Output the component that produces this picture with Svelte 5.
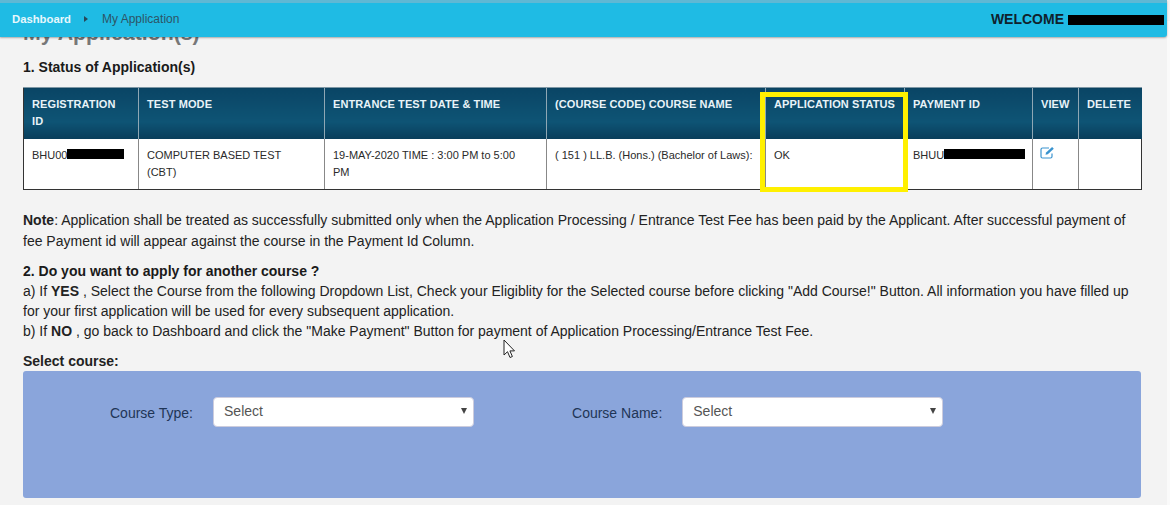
<script>
	const columns = [
		{ head: 'REGISTRATION ID', width: 115 },
		{ head: 'TEST MODE', width: 186 },
		{ head: 'ENTRANCE TEST DATE & TIME', width: 222 },
		{ head: '(COURSE CODE) COURSE NAME', width: 219 },
		{ head: 'APPLICATION STATUS', width: 139 },
		{ head: 'PAYMENT ID', width: 128 },
		{ head: 'VIEW', width: 46 },
		{ head: 'DELETE', width: 63 }
	];
</script>

<header class="topbar">
	<nav class="crumbs">
		<a href="#dashboard">Dashboard</a>
		<span class="caret"></span>
		<span class="current">My Application</span>
	</nav>
	<div class="welcome">WELCOME <span class="redact name"></span></div>
</header>

<main class="page">
	<h2 class="title">My Application(s)</h2>
	<h4 class="step">1. Status of Application(s)</h4>

	<div class="table-wrap">
		<table>
			<colgroup>
				{#each columns as col}
					<col style="width: {col.width}px" />
				{/each}
			</colgroup>
			<thead>
				<tr>
					{#each columns as col}
						<th>{col.head}</th>
					{/each}
				</tr>
			</thead>
			<tbody>
				<tr>
					<td class="nowrap">BHU00<span class="redact reg"></span></td>
					<td>COMPUTER BASED TEST<br />(CBT)</td>
					<td>19-MAY-2020 TIME : 3:00 PM to 5:00<br />PM</td>
					<td>( 151 ) LL.B. (Hons.) (Bachelor of Laws):</td>
					<td>OK</td>
					<td class="nowrap">BHUU<span class="redact pay"></span></td>
					<td>
						<svg class="edit" width="15" height="13" viewBox="0 0 15 13" fill="none" stroke="#3a93cf" stroke-width="1.2" aria-hidden="true">
							<path d="M12 7.5v3a1.5 1.5 0 0 1-1.5 1.5h-8A1.5 1.5 0 0 1 1 10.500v-7A1.500 1.500 0 0 1 2.500 2h6.500" />
							<path d="M5.500 8.800l.6-2.300 6-5.500 1.700 1.700-6 5.500z" fill="#3a93cf" stroke="none" />
						</svg>
					</td>
					<td></td>
				</tr>
			</tbody>
		</table>
		<div class="highlight"></div>
	</div>

	<p class="note">
		<b>Note</b>: Application shall be treated as successfully submitted only when the Application Processing / Entrance Test Fee has been paid by the Applicant. After successful payment of fee Payment id will appear against the course in the Payment Id Column.
	</p>

	<div class="another">
		<h4 class="step2">2. Do you want to apply for another course ?</h4>
		<p>a) If <b>YES</b> , Select the Course from the following Dropdown List, Check your Eligiblity for the Selected course before clicking "Add Course!" Button. All information you have filled up for your first application will be used for every subsequent application.</p>
		<p>b) If <b>NO</b> , go back to Dashboard and click the "Make Payment" Button for payment of Application Processing/Entrance Test Fee.</p>
	</div>

	<div class="select-label">Select course:</div>
	<section class="panel">
		<div class="field type">
			<span class="label">Course Type:</span>
			<div class="select">Select<span class="arrow"></span></div>
		</div>
		<div class="field">
			<span class="label">Course Name:</span>
			<div class="select">Select<span class="arrow"></span></div>
		</div>
	</section>

	<svg class="cursor" width="14" height="20" viewBox="0 0 14 20" aria-hidden="true">
		<path d="M1 1v15l3.500-3.300 2.500 5.800 2.400-1-2.500-5.600h4.600z" fill="#fff" stroke="#222" stroke-width="1" />
	</svg>
</main>

<style>
	:global(body) {
		background: #f3f3f3;
		font-family: 'Liberation Sans', Arial, sans-serif;
		color: #222;
		overflow: hidden;
	}

	.topbar {
		position: relative;
		z-index: 2;
		box-sizing: border-box;
		width: 1167px;
		height: 37px;
		border-top: 3px solid #5fb8d4;
		border-bottom-right-radius: 3px;
		background: #1fbbe4;
		box-shadow: 0 1px 2px rgba(0, 0, 0, 0.3);
		display: flex;
		align-items: center;
		justify-content: space-between;
		padding: 0 3px 2px 12px;
	}

	.crumbs {
		display: flex;
		align-items: center;
		font-size: 12px;
	}

	.crumbs a {
		color: #e6f7fc;
		font-size: 11.300px;
		font-weight: bold;
		text-decoration: none;
	}

	.caret {
		width: 0;
		height: 0;
		margin: 0 14px 0 13px;
		border-left: 4px solid #27485a;
		border-top: 3.500px solid transparent;
		border-bottom: 3.500px solid transparent;
	}

	.current {
		color: #2d5566;
	}

	.welcome {
		display: flex;
		align-items: center;
		gap: 4px;
		font-size: 14px;
		font-weight: bold;
		color: #10222c;
	}

	.redact {
		display: inline-block;
		background: #000;
	}

	.name {
		width: 96px;
		height: 10px;
		margin-top: 2px;
	}

	.page {
		position: relative;
		box-sizing: border-box;
		width: 1170px;
		height: 494px;
		margin-top: -16px;
		padding: 0 29px 0 23px;
		overflow: hidden;
		border-right: 3px solid #fafafa;
	}

	.title {
		margin: 0;
		font-size: 21.300px;
		line-height: 24px;
		color: #777;
	}

	.step {
		margin: 14px 0 0;
		font-size: 14px;
		line-height: 16px;
		color: #1a1a1a;
	}

	.table-wrap {
		position: relative;
		margin-top: 12px;
		width: 1118px;
	}

	table {
		width: 1118px;
		table-layout: fixed;
		border-collapse: collapse;
		font-size: 11px;
	}

	th {
		height: 51px;
		box-sizing: border-box;
		padding: 8px 4px 0 8px;
		vertical-align: top;
		text-align: left;
		font-size: 11px;
		line-height: 17px;
		letter-spacing: 0.1px;
		color: #e8f3f8;
		background: linear-gradient(#0a4565, #0e5475 65%, #093d5a);
		border-left: 1px solid #8fa7b4;
		border-top: 1px solid #7d97a5;
	}

	th:first-child {
		padding-right: 14px;
	}

	td {
		height: 51px;
		box-sizing: border-box;
		padding: 8px 8px 0;
		vertical-align: top;
		line-height: 17px;
		background: #fff;
		color: #2a2a2a;
		border-left: 1px solid #888;
		border-bottom: 1px solid #333;
	}

	th:first-child,
	td:first-child {
		border-left: 1px solid #333;
	}

	td:last-child {
		border-right: 1px solid #333;
	}

	.nowrap {
		white-space: nowrap;
	}

	.reg {
		width: 57px;
		height: 10px;
	}

	.pay {
		width: 81px;
		height: 10px;
	}

	.edit {
		display: block;
		margin: -1px 0 0 -1px;
	}

	.highlight {
		position: absolute;
		left: 737px;
		top: 5px;
		width: 138px;
		height: 90px;
		border: 5px solid #fff000;
	}

	.note {
		margin: 20px 0 0;
		font-size: 14px;
		line-height: 21px;
		color: #222;
	}

	.another {
		margin-top: 9px;
		font-size: 14px;
		line-height: 20px;
	}

	.step2 {
		margin: 0;
		font-size: 14px;
		line-height: 20px;
		color: #1a1a1a;
	}

	.another p {
		margin: 0;
	}

	.select-label {
		margin-top: 10px;
		font-size: 14px;
		font-weight: bold;
		line-height: 20px;
	}

	.panel {
		box-sizing: border-box;
		width: 1118px;
		height: 127px;
		border-radius: 3px;
		background: #8aa5db;
		display: flex;
		align-items: flex-start;
		padding: 26px 0 0 87px;
	}

	.field {
		display: flex;
		align-items: center;
		gap: 20px;
	}

	.label {
		font-size: 14px;
		color: #1f3556;
		padding-top: 1px;
	}

	.type {
		margin-right: 98px;
	}

	.select {
		position: relative;
		box-sizing: border-box;
		width: 261px;
		height: 30px;
		padding: 0 10px;
		font-size: 14px;
		line-height: 26px;
		color: #555;
		background: #fff;
		border: 1px solid #ccd;
		border-radius: 4px;
	}

	.arrow {
		position: absolute;
		right: 6px;
		top: 10px;
		width: 0;
		height: 0;
		border-top: 6px solid #444;
		border-left: 3px solid transparent;
		border-right: 3px solid transparent;
	}

	.cursor {
		position: absolute;
		left: 503px;
		top: 318px;
	}
</style>
